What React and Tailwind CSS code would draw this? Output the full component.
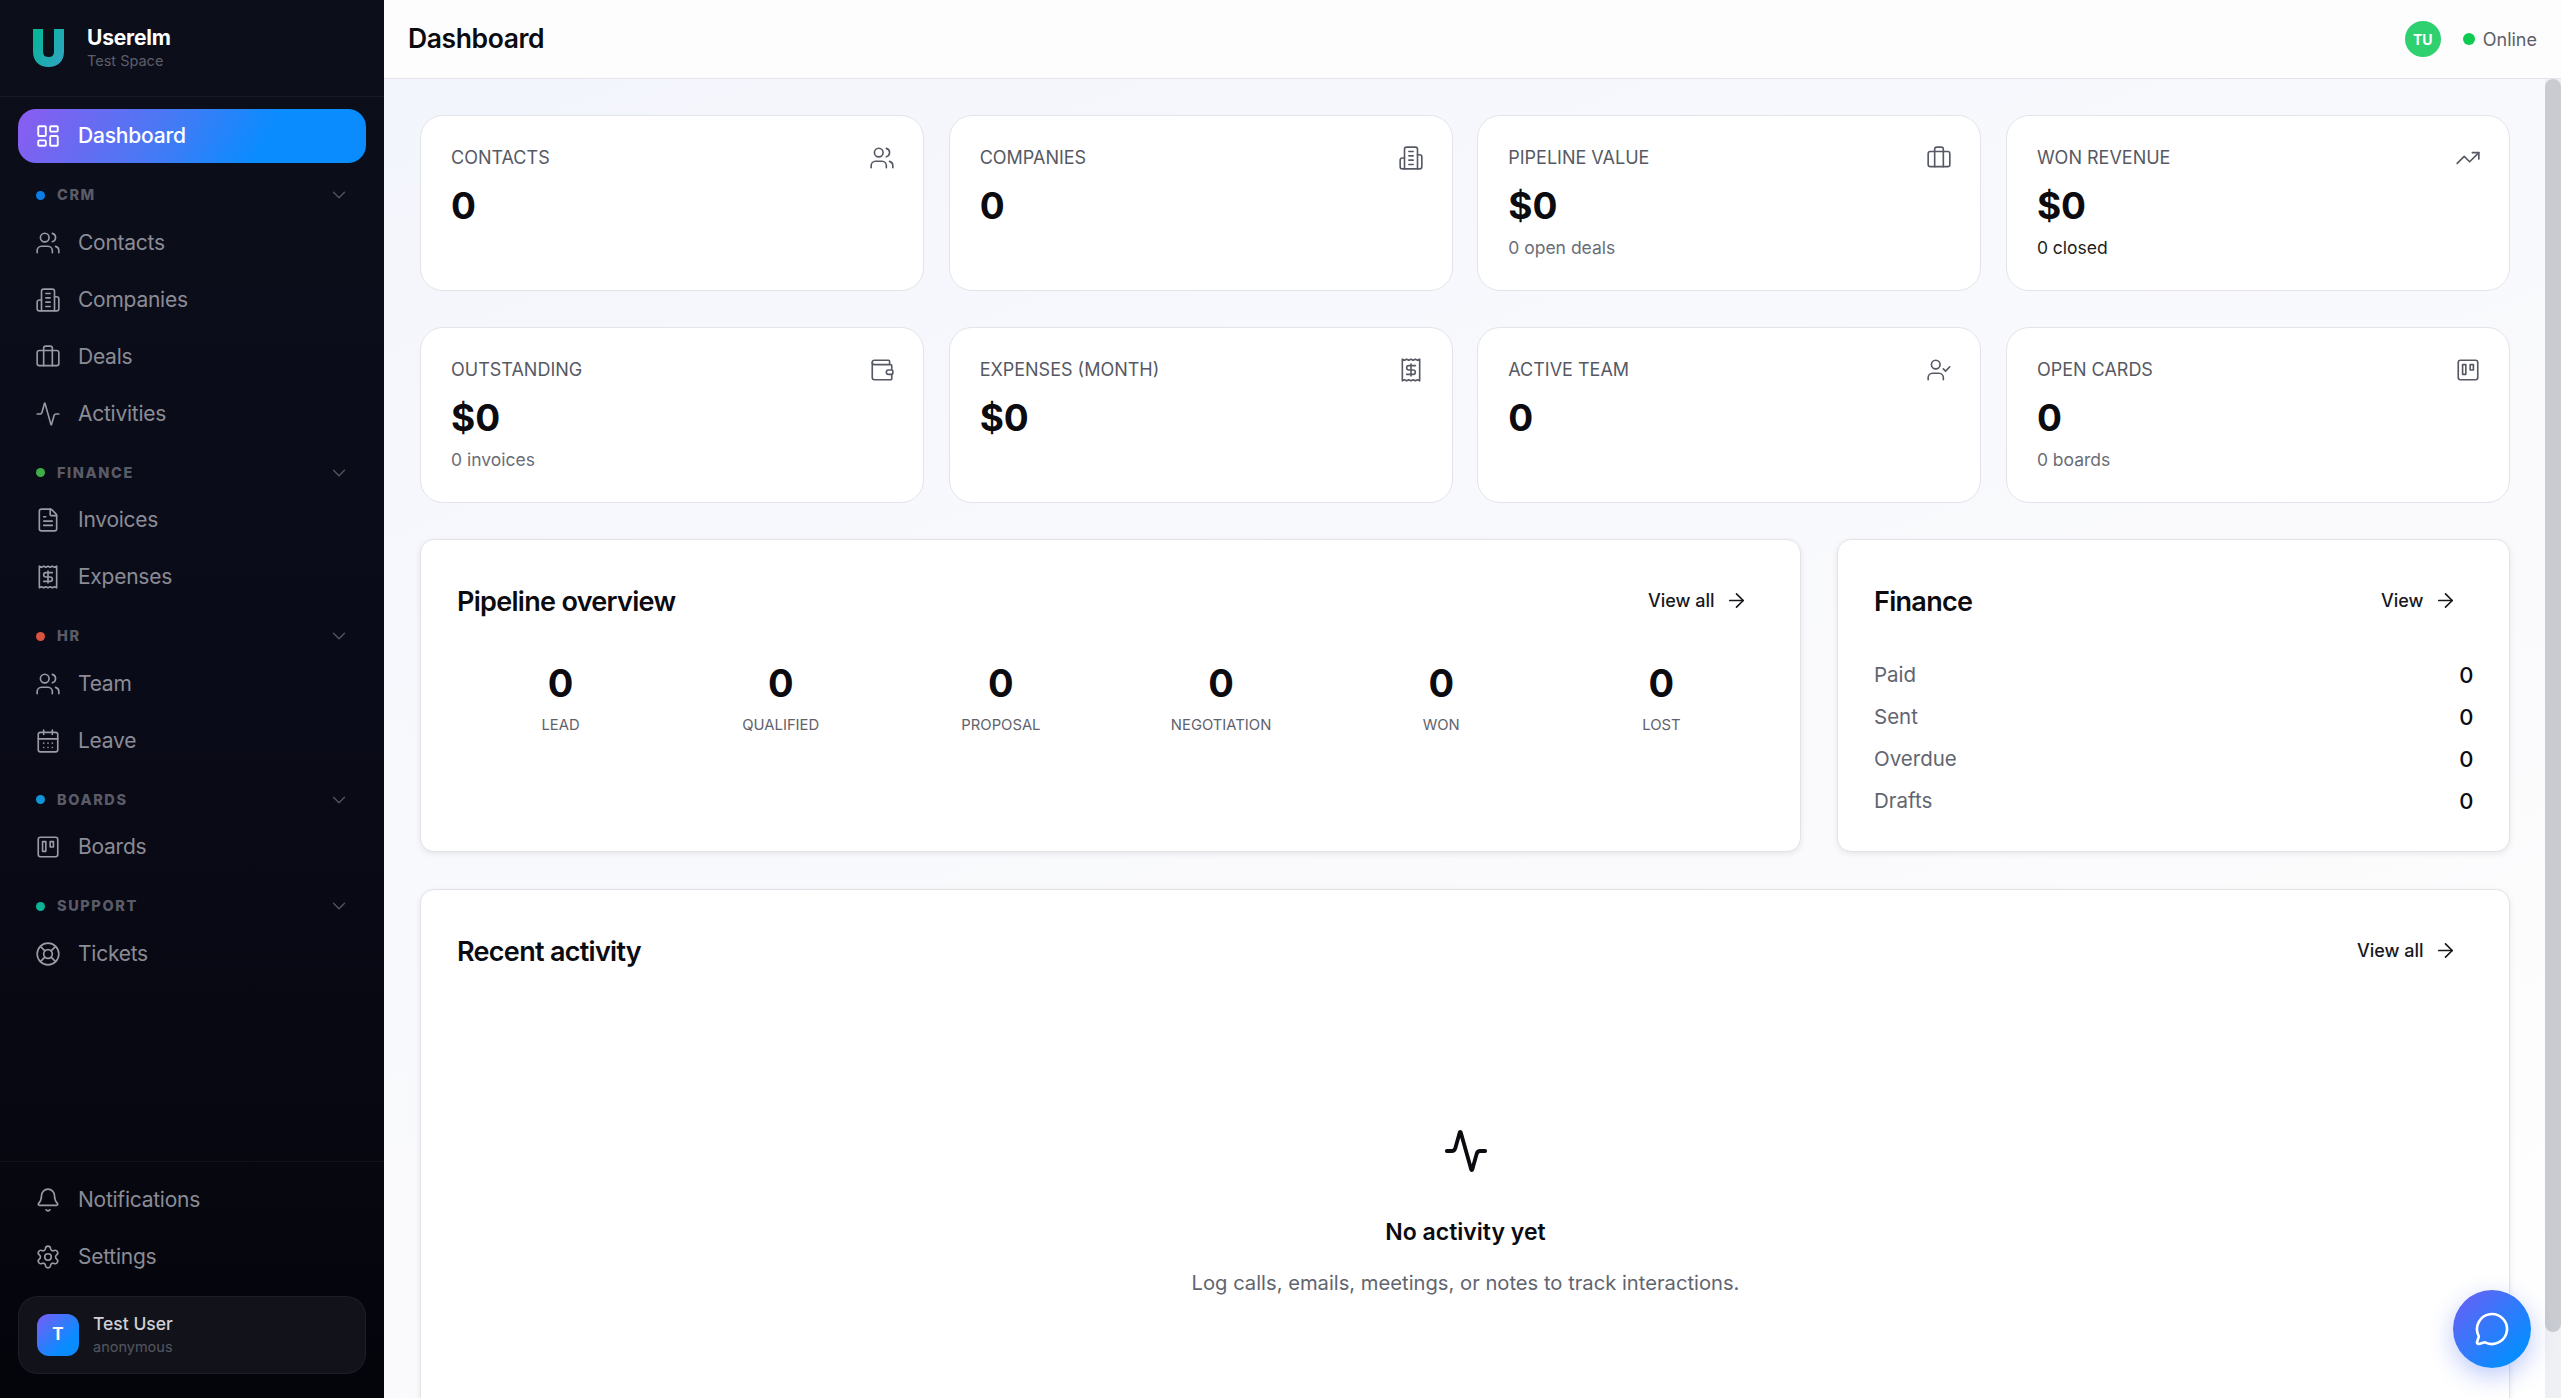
import React from "react";
import {
  LayoutDashboard, Users, Briefcase, Activity, FileText, CalendarDays,
  LifeBuoy, Bell, Settings, ChevronDown, ArrowRight, Wallet, UserCheck, TrendingUp, MessageCircle,
} from "lucide-react";

const Svg = ({ className, strokeWidth = 1.5, children }) => (
  <svg viewBox="0 0 24 24" fill="none" stroke="currentColor" strokeWidth={strokeWidth} strokeLinecap="round" strokeLinejoin="round" className={className}>
    {children}
  </svg>
);

const Kanban = (p) => (
  <Svg {...p}>
    <rect width="18" height="18" x="3" y="3" rx="2" />
    <rect width="3" height="9" x="7" y="7" />
    <rect width="3" height="5" x="14" y="7" />
  </Svg>
);

const Building = (p) => (
  <Svg {...p}>
    <path d="M6 22V4a2 2 0 0 1 2-2h8a2 2 0 0 1 2 2v18Z" />
    <path d="M6 12H4a2 2 0 0 0-2 2v6a2 2 0 0 0 2 2h2" />
    <path d="M18 9h2a2 2 0 0 1 2 2v9a2 2 0 0 1-2 2h-2" />
    <path d="M10 6h4" />
    <path d="M10 10h4" />
    <path d="M10 14h4" />
    <path d="M10 18h4" />
  </Svg>
);

const ReceiptIcon = (p) => (
  <Svg {...p}>
    <path d="M4 2v20l2-1 2 1 2-1 2 1 2-1 2 1 2-1 2 1V2l-2 1-2-1-2 1-2-1-2 1-2-1-2 1Z" />
    <path d="M16 8h-6a2 2 0 1 0 0 4h4a2 2 0 1 1 0 4H8" />
    <path d="M12 17.5v-11" />
  </Svg>
);

const Logo = () => (
  <svg viewBox="0 0 31 38" className="h-[38px] w-[31px]" fill="none">
    <defs>
      <linearGradient id="logoU" x1="0" y1="0" x2="1" y2="1">
        <stop offset="0" stopColor="#05b596" />
        <stop offset="1" stopColor="#2ca6c0" />
      </linearGradient>
    </defs>
    <path d="M5 0V22.5C5 29.5 9 33 15.5 33C22 33 26 29.5 26 22.5V0" stroke="url(#logoU)" strokeWidth="10" />
  </svg>
);

const NavItem = ({ icon: Icon, label }) => (
  <div className="flex h-[54px] items-center gap-[17px] rounded-[18px] pl-[17px] text-[21px] tracking-[-0.25px] text-[#8b8c96]">
    <Icon className="h-[26px] w-[26px] shrink-0 text-[#9a9ba4]" strokeWidth={1.5} />
    <span>{label}</span>
  </div>
);

const Group = ({ dot, label, children }) => (
  <div>
    <div className="mb-[7.5px] flex h-[26px] items-center pl-[18px] pr-[16px]">
      <span className={`h-[9px] w-[9px] rounded-full ${dot}`} />
      <span className="ml-[12px] flex-1 text-[14.5px] font-extrabold tracking-[1.6px] text-[#5a5b67]">{label}</span>
      <ChevronDown className="h-[22px] w-[22px] text-[#53545f]" strokeWidth={1.5} />
    </div>
    <div className="flex flex-col gap-[3px]">{children}</div>
  </div>
);

const Sidebar = () => (
  <aside className="flex h-full w-[384px] shrink-0 flex-col bg-[linear-gradient(180deg,#0c0e1a_0%,#0a0b18_50%,#04050b_100%)]">
    <div className="flex h-[97px] shrink-0 items-center border-b border-white/5 pl-[33px]">
      <Logo />
      <div className="ml-[23px]">
        <div className="text-[21px] leading-[26px] font-bold tracking-[-0.2px] text-white">Userelm</div>
        <div className="text-[14.5px] leading-[20px] text-[#5d5e6a]">Test Space</div>
      </div>
    </div>
    <nav className="flex flex-col gap-[19px] px-[18px] pt-[12px]">
      <div className="flex h-[54px] items-center gap-[17px] rounded-[18px] bg-[linear-gradient(120deg,#8b5cf0_0%,#4a78f4_40%,#0a8cff_70%)] pl-[17px] text-[21px] font-medium tracking-[-0.2px] text-white">
        <LayoutDashboard className="h-[26px] w-[26px]" strokeWidth={1.75} />
        <span>Dashboard</span>
      </div>
      <Group dot="bg-[#0a7ee6]" label="CRM">
        <NavItem icon={Users} label="Contacts" />
        <NavItem icon={Building} label="Companies" />
        <NavItem icon={Briefcase} label="Deals" />
        <NavItem icon={Activity} label="Activities" />
      </Group>
      <Group dot="bg-[#3fae49]" label="FINANCE">
        <NavItem icon={FileText} label="Invoices" />
        <NavItem icon={ReceiptIcon} label="Expenses" />
      </Group>
      <Group dot="bg-[#d9533f]" label="HR">
        <NavItem icon={Users} label="Team" />
        <NavItem icon={CalendarDays} label="Leave" />
      </Group>
      <Group dot="bg-[#0f96d6]" label="BOARDS">
        <NavItem icon={Kanban} label="Boards" />
      </Group>
      <Group dot="bg-[#0db394]" label="SUPPORT">
        <NavItem icon={LifeBuoy} label="Tickets" />
      </Group>
    </nav>
    <div className="mt-auto border-t border-white/5 px-[18px] pt-[11px] pb-[24px]">
      <div className="flex flex-col gap-[3px]">
        <NavItem icon={Bell} label="Notifications" />
        <NavItem icon={Settings} label="Settings" />
      </div>
      <div className="mt-[12px] flex h-[78px] items-center gap-[14px] rounded-[20px] border border-white/5 bg-[#12131a] pl-[18px]">
        <div className="flex h-[42px] w-[42px] items-center justify-center rounded-[12px] bg-[linear-gradient(135deg,#7a5cf5_0%,#0a8cff_70%)] text-[17px] font-bold text-white">T</div>
        <div>
          <div className="text-[17.5px] leading-[24px] font-medium text-[#d0d0d6]">Test User</div>
          <div className="text-[14.5px] leading-[22px] text-[#55565f]">anonymous</div>
        </div>
      </div>
    </div>
  </aside>
);

const Stat = ({ label, value, sub, icon: Icon, subDark }) => (
  <div className="h-[175.5px] rounded-[23px] border border-[#e3e4ea] bg-white pl-[30px] pr-[28px] pt-[29px]">
    <div className="flex h-[26px] items-center justify-between">
      <span className="text-[18px] leading-[26px] text-[#565963]">{label}</span>
      <Icon className="h-[26px] w-[26px] text-[#565963]" strokeWidth={1.5} />
    </div>
    <div className="mt-[13px] text-[37px] leading-[44px] font-bold text-[#0b0b10]">{value}</div>
    {sub && <div className={`mt-[7px] text-[17.5px] leading-[26px] ${subDark ? "text-[#1d1e24]" : "text-[#6a6d77]"}`}>{sub}</div>}
  </div>
);

const CardHead = ({ title, action }) => (
  <div className="flex h-[42px] items-center justify-between pr-[17px]">
    <h2 className="text-[27px] font-semibold tracking-[-0.7px] text-[#0b0b10]">{title}</h2>
    <div className="mb-[3px] flex items-center gap-[10.5px] text-[18px] font-medium text-[#17181d]">
      <span>{action}</span>
      <ArrowRight className="h-[23px] w-[23px]" strokeWidth={1.75} />
    </div>
  </div>
);

const Pipe = ({ label }) => (
  <div className="text-center">
    <div className="text-[38px] leading-[46px] font-bold text-[#0b0b10]">0</div>
    <div className="mt-[7px] text-[14.8px] leading-[24px] text-[#5f626c]">{label}</div>
  </div>
);

const FinRow = ({ label }) => (
  <div className="flex h-[42px] items-center justify-between pr-[0.5px] text-[20.5px]">
    <span className="text-[#62656f]">{label}</span>
    <span className="text-[22px] font-medium text-[#0b0b10]">0</span>
  </div>
);

const Panel = ({ className = "", children }) => (
  <section className={`rounded-[14px] border border-[#e3e3e7] bg-white pl-[36px] pr-[35px] pt-[41px] shadow-[0_2px_6px_rgba(15,15,30,0.08)] ${className}`}>
    {children}
  </section>
);

export default function App() {
  return (
    <div className="relative flex h-screen w-screen overflow-hidden bg-white text-[#0b0b10] antialiased [font-family:Inter,'Liberation_Sans',sans-serif]">
      <Sidebar />
      <div className="flex min-w-0 flex-1 flex-col">
        <header className="flex h-[79px] shrink-0 items-center border-b border-[#e4e5ea] bg-[#fdfdfe] pl-[24px] pr-[24px]">
          <h1 className="flex-1 text-[26.5px] font-semibold tracking-[-0.4px] text-[#0b0b10]">Dashboard</h1>
          <div className="flex h-[36px] w-[36px] items-center justify-center rounded-full bg-[#2fd06f] text-[14px] font-bold text-white">TU</div>
          <span className="ml-[22px] h-[12px] w-[12px] rounded-full bg-[#0fca50]" />
          <span className="ml-[8px] text-[18px] text-[#5c5f69]">Online</span>
        </header>
        <div className="flex min-h-0 flex-1 bg-[linear-gradient(160deg,#f3f5fc_0%,#f8f9fd_35%,#fafafc_60%,#ffffff_100%)]">
          <main className="min-w-0 flex-1 overflow-hidden pl-[36px] pr-[35px] pt-[36px]">
            <div className="grid grid-cols-4 gap-x-[24.5px] gap-y-[36.5px]">
              <Stat label="CONTACTS" value="0" icon={Users} />
              <Stat label="COMPANIES" value="0" icon={Building} />
              <Stat label="PIPELINE VALUE" value="$0" sub="0 open deals" icon={Briefcase} />
              <Stat label="WON REVENUE" value="$0" sub="0 closed" icon={TrendingUp} subDark />
              <Stat label="OUTSTANDING" value="$0" sub="0 invoices" icon={Wallet} />
              <Stat label="EXPENSES (MONTH)" value="$0" icon={ReceiptIcon} />
              <Stat label="ACTIVE TEAM" value="0" icon={UserCheck} />
              <Stat label="OPEN CARDS" value="0" sub="0 boards" icon={Kanban} />
            </div>
            <div className="mt-[36.5px] grid grid-cols-[1381px_673px] gap-x-[36px]">
              <Panel className="h-[313px]">
                <CardHead title="Pipeline overview" action="View all" />
                <div className="mt-[37px] grid grid-cols-6 gap-x-[13px]">
                  <Pipe label="LEAD" />
                  <Pipe label="QUALIFIED" />
                  <Pipe label="PROPOSAL" />
                  <Pipe label="NEGOTIATION" />
                  <Pipe label="WON" />
                  <Pipe label="LOST" />
                </div>
              </Panel>
              <Panel className="h-[313px]">
                <CardHead title="Finance" action="View" />
                <div className="mt-[31px]">
                  <FinRow label="Paid" />
                  <FinRow label="Sent" />
                  <FinRow label="Overdue" />
                  <FinRow label="Drafts" />
                </div>
              </Panel>
            </div>
            <Panel className="mt-[37px] h-[700px]">
              <CardHead title="Recent activity" action="View all" />
              <div className="mt-[154.5px] flex flex-col items-center">
                <Activity className="h-[46px] w-[46px] text-[#0b0b10]" strokeWidth={2} />
                <div className="mt-[41px] text-[23px] leading-[34px] font-semibold text-[#0b0b10]">No activity yet</div>
                <div className="mt-[19px] text-[20.2px] leading-[30px] text-[#62656f]">Log calls, emails, meetings, or notes to track interactions.</div>
              </div>
            </Panel>
          </main>
          <div className="w-[16px] shrink-0 bg-[#eff0f3]">
            <div className="h-[1253px] rounded-[8px] bg-[#c9cbd1]" />
          </div>
        </div>
      </div>
      <button className="absolute left-[2453px] top-[1290px] flex h-[78px] w-[78px] items-center justify-center rounded-full bg-[linear-gradient(135deg,#6e5df4_0%,#0a8cff_80%)] text-white shadow-[0_8px_24px_rgba(40,80,240,0.3)]">
        <MessageCircle className="h-[36px] w-[36px]" strokeWidth={1.75} />
      </button>
    </div>
  );
}
